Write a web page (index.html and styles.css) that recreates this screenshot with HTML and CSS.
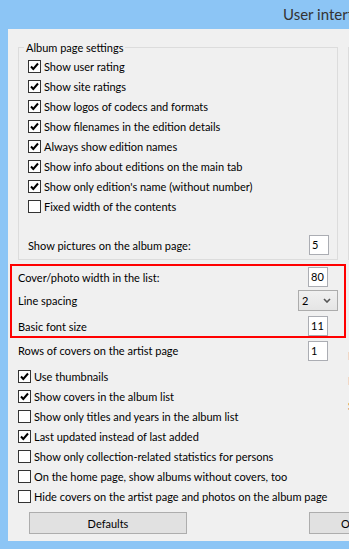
FILE: index.html
```html
<!DOCTYPE html>
<html lang="en">
<head>
  <meta charset="UTF-8" />
  <title>User interface settings</title>
  <link rel="stylesheet" href="styles.css">
</head>
<body>
  <div class="window">
    <div class="titlebar">User interface settings</div>

    <div class="client">
      <div class="panes">
        <div class="main">
          <fieldset class="group">
            <legend>Album page settings</legend>
            <div class="checks">
              <label class="check"><span class="box"><svg viewBox="0 0 11 11"><path d="M2 5.5 L4.3 8 L9 2.5"/></svg></span>Show user rating</label>
              <label class="check"><span class="box"><svg viewBox="0 0 11 11"><path d="M2 5.5 L4.3 8 L9 2.5"/></svg></span>Show site ratings</label>
              <label class="check"><span class="box"><svg viewBox="0 0 11 11"><path d="M2 5.5 L4.3 8 L9 2.5"/></svg></span>Show logos of codecs and formats</label>
              <label class="check"><span class="box"><svg viewBox="0 0 11 11"><path d="M2 5.5 L4.3 8 L9 2.5"/></svg></span>Show filenames in the edition details</label>
              <label class="check"><span class="box"><svg viewBox="0 0 11 11"><path d="M2 5.5 L4.3 8 L9 2.5"/></svg></span>Always show edition names</label>
              <label class="check"><span class="box"><svg viewBox="0 0 11 11"><path d="M2 5.5 L4.3 8 L9 2.5"/></svg></span>Show info about editions on the main tab</label>
              <label class="check"><span class="box"><svg viewBox="0 0 11 11"><path d="M2 5.5 L4.3 8 L9 2.5"/></svg></span>Show only edition's name (without number)</label>
              <label class="check"><span class="box"></span>Fixed width of the contents</label>
            </div>
            <div class="field pictures">
              <span>Show pictures on the album page:</span>
              <span class="num">5</span>
            </div>
          </fieldset>

          <div class="highlight">
            <div class="field">
              <span>Cover/photo width in the list:</span>
              <span class="num">80</span>
            </div>
            <div class="field spacing">
              <span>Line spacing</span>
              <span class="combo">2
                <svg viewBox="0 0 8 5"><path d="M1 1 L4 4 L7 1"/></svg>
              </span>
            </div>
            <div class="field size">
              <span>Basic font size</span>
              <span class="num">11</span>
            </div>
          </div>

          <div class="field rows">
            <span>Rows of covers on the artist page</span>
            <span class="num">1</span>
          </div>

          <div class="checks lower">
            <label class="check"><span class="box"><svg viewBox="0 0 11 11"><path d="M2 5.5 L4.3 8 L9 2.5"/></svg></span>Use thumbnails</label>
            <label class="check"><span class="box"><svg viewBox="0 0 11 11"><path d="M2 5.5 L4.3 8 L9 2.5"/></svg></span>Show covers in the album list</label>
            <label class="check"><span class="box"></span>Show only titles and years in the album list</label>
            <label class="check"><span class="box"><svg viewBox="0 0 11 11"><path d="M2 5.5 L4.3 8 L9 2.5"/></svg></span>Last updated instead of last added</label>
            <label class="check"><span class="box"></span>Show only collection-related statistics for persons</label>
            <label class="check"><span class="box"></span>On the home page, show albums without covers, too</label>
            <label class="check"><span class="box"></span>Hide covers on the artist page and photos on the album page</label>
          </div>
        </div>

        <div class="side">
          <fieldset class="group side-group">
            <legend>Artist page settings</legend>
          </fieldset>
          <div class="side-list">
            <div class="side-item">Name</div>
            <div class="side-item">Name</div>
            <div class="side-item red">Size</div>
          </div>
        </div>
      </div>

      <div class="buttons">
        <button>Defaults</button>
        <button class="ok">OK</button>
      </div>
    </div>
  </div>
</body>
</html>
```

FILE: styles.css
```css
* {
  margin: 0;
  padding: 0;
  box-sizing: border-box;
}

html, body {
  width: 349px;
  height: 549px;
  overflow: hidden;
}

body {
  font-family: Lato, "Liberation Sans", sans-serif;
  font-size: 11px;
  color: #000;
}

.window {
  width: 349px;
  height: 549px;
  overflow: hidden;
  background: #8cc5f5;
}

.titlebar {
  height: 29px;
  line-height: 29px;
  padding-left: 283px;
  font-size: 15px;
  color: #333;
  white-space: nowrap;
}

.client {
  margin-left: 8px;
  width: 600px;
  height: 512px;
  background: #f0f0f0;
  display: flex;
  flex-direction: column;
}

.panes {
  display: flex;
}

.main {
  width: 336px;
  margin-left: 2px;
  padding-top: 11px;
  flex: none;
}

/* group boxes */
.group {
  border: 1px solid #dcdcdc;
  border-radius: 0;
  padding: 0;
  min-width: 0;
}

.group legend {
  margin-left: 5px;
  padding: 0 2px;
  line-height: 15px;
  white-space: nowrap;
}

.main .group {
  margin-left: 8px;
  width: 320px;
  padding-bottom: 4px;
}

.main .group .checks {
  padding: 2px 0 0 9px;
}

/* checkboxes */
.check {
  display: flex;
  align-items: flex-start;
  height: 20px;
  line-height: 19px;
  white-space: nowrap;
}

.box {
  flex: none;
  width: 13px;
  height: 13px;
  margin: 3px 3px 0 0;
  border: 1px solid #333;
  background: #fff;
}

.box svg {
  display: block;
  width: 11px;
  height: 11px;
  fill: none;
  stroke: #000;
  stroke-width: 2;
}

/* label + value rows */
.field {
  display: flex;
  align-items: center;
  justify-content: space-between;
  height: 20px;
  white-space: nowrap;
}

.num {
  width: 20px;
  height: 20px;
  line-height: 17px;
  padding-left: 2px;
  border: 1px solid #abadb3;
  background: #fff;
}

.pictures {
  margin-top: 18px;
  padding: 0 8px 0 9px;
}

.highlight {
  border: 2px solid #f00;
  margin-top: 4px;
  padding: 1px 6px 0 6px;
}

.highlight .num {
  margin-right: 10px;
}

.spacing {
  height: 21px;
  margin-top: 3px;
}

.size {
  margin-top: 5px;
}

.combo {
  display: flex;
  align-items: center;
  justify-content: space-between;
  width: 40px;
  height: 21px;
  padding: 0 6px 0 3px;
  border: 1px solid #acacac;
  background: linear-gradient(#f0f0f0, #e5e5e5);
}

.combo svg {
  width: 8px;
  height: 5px;
  fill: none;
  stroke: #555;
  stroke-width: 1.6;
}

.rows {
  height: 21px;
  margin-top: 2px;
  padding: 0 18px 0 8px;
}

.lower {
  margin-top: 6px;
  padding-left: 8px;
}

/* right-hand pane, mostly cut off */
.side {
  margin-left: 2px;
  padding-top: 11px;
  width: 240px;
  flex: none;
}

.side-group {
  height: 220px;
}

.side-list {
  margin-top: 83px;
}

.side-item {
  height: 25px;
  line-height: 25px;
  color: #1c2a78;
}

.side-item.red {
  color: #8a2020;
}

/* dialog buttons */
.buttons {
  display: flex;
  gap: 122px;
  margin-top: 5px;
  padding-left: 21px;
}

.buttons button {
  width: 158px;
  height: 22px;
  flex: none;
  font-family: inherit;
  font-size: 11px;
  color: #000;
  background: #e1e1e1;
  border: 1px solid #adadad;
}

.buttons .ok {
  width: 80px;
}
```
